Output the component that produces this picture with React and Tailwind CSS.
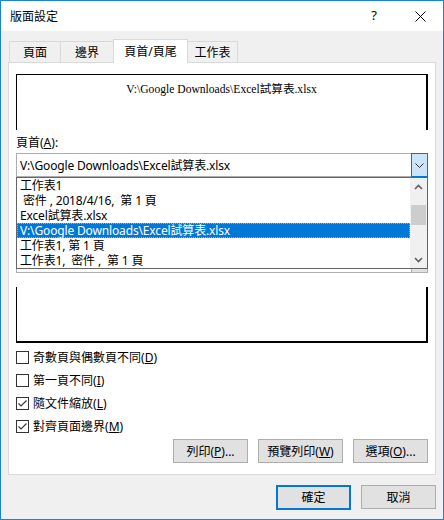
import React from "react";

const ui = "font-['Noto_Sans','Noto_Sans_CJK_TC',sans-serif]";

const tabs = [
  { label: "頁面", w: "w-[52px]" },
  { label: "邊界", w: "w-[54px]" },
  { label: "頁首/頁尾", w: "w-[75px]", active: true },
  { label: "工作表", w: "w-[51px]" },
];

const listItems = [
  "工作表1",
  " 密件 , 2018/4/16,  第 1 頁",
  "Excel試算表.xlsx",
  "V:\\Google Downloads\\Excel試算表.xlsx",
  "工作表1, 第 1 頁",
  "工作表1,  密件 ,  第 1 頁",
];

const Chevron = ({ up, className }) => (
  <svg width="9" height="6" viewBox="0 0 9 6" className={className}>
    <polyline
      points={up ? "1,5 4.5,1.5 8,5" : "1,1 4.5,4.5 8,1"}
      fill="none"
      stroke="currentColor"
      strokeWidth="1.6"
    />
  </svg>
);

const Check = () => (
  <svg width="11" height="11" viewBox="0 0 11 11">
    <polyline points="1.5,5.5 4,8 9.5,2.5" fill="none" stroke="#333" strokeWidth="1.1" />
  </svg>
);

const CheckRow = ({ checked, text, key1 }) => (
  <div className="flex h-[23px] items-center">
    <span className="flex h-[13px] w-[13px] items-center justify-center border border-[#333] bg-white">
      {checked && <Check />}
    </span>
    <span className="ml-[4px] text-[12px] leading-[15px] text-black">
      {text}(<u>{key1}</u>)
    </span>
  </div>
);

const Btn = ({ w, children, primary }) => (
  <button
    className={`${w} ${primary ? "h-[25px] border-2 border-[#0078d7]" : "h-[24px] border border-[#adadad]"} flex items-center justify-center bg-[#e1e1e1] text-[12px] leading-[15px] text-black`}
  >
    {children}
  </button>
);

const Combo = ({ text, active }) => (
  <div className="flex h-[24px]">
    <div className="flex flex-1 items-center border-y border-l border-[#adadad] bg-white pl-[3px] text-[12px] leading-[15px] tracking-[-0.15px] whitespace-pre">
      {text}
    </div>
    <div
      className={`flex w-[17px] items-center justify-center border ${
        active ? "border-[#0078d7] bg-[#cce4f7] text-[#333]" : "border-[#adadad] bg-[#e1e1e1] text-[#333]"
      }`}
    >
      <svg width="9" height="5" viewBox="0 0 9 5">
        <polyline points="0.5,0.5 4.5,4.5 8.5,0.5" fill="none" stroke="currentColor" strokeWidth="1" />
      </svg>
    </div>
  </div>
);

export default function App() {
  return (
    <div className={`${ui} flex h-[520px] w-[444px] flex-col border border-[#1883d7] bg-[#f0f0f0] text-black`}>
      {/* title bar */}
      <div className="flex h-[30px] items-center bg-white">
        <span className="flex-1 pl-[9px] text-[12px] leading-[15px]">版面設定</span>
        <span className="flex h-full w-[46px] items-center justify-center text-[13px]">?</span>
        <span className="flex h-full w-[46px] items-center justify-center">
          <svg width="11" height="11" viewBox="0 0 11 11">
            <path d="M0.5 0.5L10.5 10.5M10.5 0.5L0.5 10.5" stroke="#000" strokeWidth="1" />
          </svg>
        </span>
      </div>

      <div className="px-[7px] pt-[8px]">
        {/* tabs */}
        <div className="flex h-[23px] items-end pl-px">
          {tabs.map((t, i) =>
            t.active ? (
              <div
                key={t.label}
                className={`${t.w} relative z-10 -mb-px -ml-px flex h-[24px] items-center justify-center border border-b-0 border-[#d9d9d9] bg-white text-[12px] leading-[15px]`}
              >
                {t.label}
              </div>
            ) : (
              <div
                key={t.label}
                className={`${t.w} ${i > 0 ? "-ml-px" : ""} flex h-[21px] items-center justify-center border border-b-0 border-[#d9d9d9] bg-[#f0f0f0] text-[12px] leading-[15px]`}
              >
                {t.label}
              </div>
            )
          )}
        </div>

        {/* panel */}
        <div className="relative flex h-[413px] flex-col border border-[#d9d9d9] bg-white px-[7px] pt-[11px]">
          <div className="h-[56px] border-t border-l border-r-2 border-black pt-[7px] text-center font-['Liberation_Serif','Noto_Sans_CJK_TC',serif] text-[11.6px] leading-[15px]">
            V:\Google Downloads\Excel試算表.xlsx
          </div>

          <div className="mt-[5px] text-[12px] leading-[15px]">
            頁首(<u>A</u>):
          </div>
          <div className="mt-[3px]">
            <Combo text={"V:\\Google Downloads\\Excel試算表.xlsx"} active />
          </div>

          {/* footer label sits under the open list */}
          <div className="mt-[54px] h-[15px]" />
          <div className="mt-[3px]">
            <Combo text="" />
          </div>

          <div className="mt-[14px] h-[56px] border-l border-r-2 border-b-2 border-black" />

          <div className="mt-[3px] flex flex-col">
            <CheckRow text="奇數頁與偶數頁不同" key1="D" />
            <CheckRow text="第一頁不同" key1="I" />
            <CheckRow checked text="隨文件縮放" key1="L" />
            <CheckRow checked text="對齊頁面邊界" key1="M" />
          </div>

          <div className="mt-px flex justify-end gap-[10px]">
            <Btn w="w-[75px]">列印(<u>P</u>)...</Btn>
            <Btn w="w-[85px]">預覽列印(<u>W</u>)</Btn>
            <Btn w="w-[75px]">選項(<u>O</u>)...</Btn>
          </div>

          {/* open dropdown list */}
          <div className="absolute left-[7px] top-[114px] z-20 flex h-[92px] w-[412px] border border-[#646464] bg-white">
            <div className="flex flex-1 flex-col">
              {listItems.map((it, i) => (
                <div
                  key={i}
                  className={`flex h-[15px] items-center overflow-hidden pl-[3px] text-[12px] leading-[14px] tracking-[-0.15px] whitespace-pre ${
                    i === 3
                      ? "bg-[#0078d7] text-white outline-1 outline-dotted outline-[#e8a050] -outline-offset-1"
                      : "text-black"
                  }`}
                >
                  {it}
                </div>
              ))}
            </div>
            <div className="flex w-[17px] flex-col bg-[#f0f0f0] text-[#606060]">
              <div className="flex h-[17px] items-center justify-center">
                <Chevron up />
              </div>
              <div className="flex-1">
                <div className="mx-px mt-[10px] h-[20px] bg-[#cdcdcd]" />
              </div>
              <div className="flex h-[17px] items-center justify-center">
                <Chevron />
              </div>
            </div>
          </div>
        </div>

        {/* bottom buttons */}
        <div className="mt-[10px] flex justify-end gap-[10px]">
          <Btn w="w-[75px]" primary>確定</Btn>
          <Btn w="w-[75px]">取消</Btn>
        </div>
      </div>
    </div>
  );
}
